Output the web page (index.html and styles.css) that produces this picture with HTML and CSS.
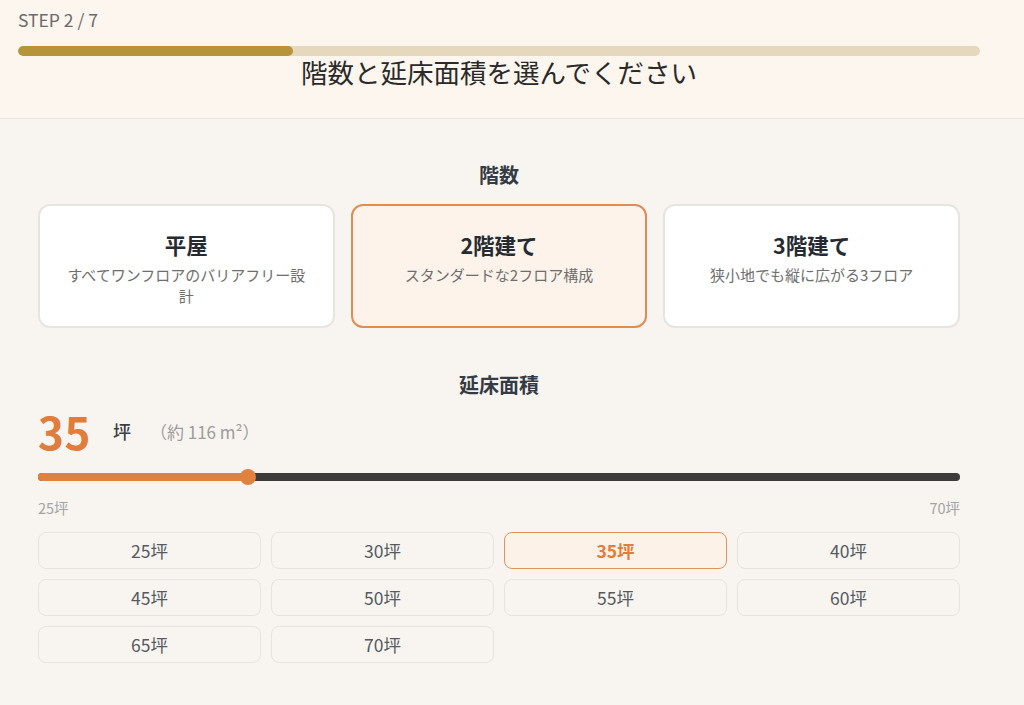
FILE: index.html
```html
<!DOCTYPE html>
<html lang="ja">
<head>
    <meta charset="UTF-8">
    <meta name="viewport" content="width=device-width, initial-scale=1.0">
    <title>STEP 2 / 7</title>
    <link rel="stylesheet" href="styles.css">
</head>
<body>
    <header class="top">
        <div class="wrap">
            <div class="step">STEP 2 / 7</div>
            <div class="progress"><div class="progress-fill" style="width: 28.57%;"></div></div>
            <h1>階数と延床面積を選んでください</h1>
        </div>
    </header>

    <main class="wrap content">
        <h2>階数</h2>
        <div class="cards">
            <div class="card">
                <div class="card-title">平屋</div>
                <div class="card-sub">すべてワンフロアのバリアフリー設計</div>
            </div>
            <div class="card selected">
                <div class="card-title">2階建て</div>
                <div class="card-sub">スタンダードな2フロア構成</div>
            </div>
            <div class="card">
                <div class="card-title">3階建て</div>
                <div class="card-sub">狭小地でも縦に広がる3フロア</div>
            </div>
        </div>

        <h2 class="area-head">延床面積</h2>
        <div class="area-value">
            <span class="num">35</span>
            <span class="unit">坪</span>
            <span class="sqm">（約 116 m²）</span>
        </div>
        <div class="slider">
            <div class="slider-fill" style="width: 22.8%;"><span class="thumb"></span></div>
        </div>
        <div class="slider-labels">
            <span>25坪</span>
            <span>70坪</span>
        </div>

        <div class="chips">
            <div class="chip">25坪</div>
            <div class="chip">30坪</div>
            <div class="chip selected">35坪</div>
            <div class="chip">40坪</div>
            <div class="chip">45坪</div>
            <div class="chip">50坪</div>
            <div class="chip">55坪</div>
            <div class="chip">60坪</div>
            <div class="chip">65坪</div>
            <div class="chip">70坪</div>
        </div>
    </main>
</body>
</html>
```

FILE: styles.css
```css
body { margin: 0; background-color: #f8f5f0; font-family: "Noto Sans CJK JP", "Noto Sans", sans-serif; color: #333; }
.wrap { width: 962px; margin-left: 18px; box-sizing: border-box; }

.top { background-color: #fdf6ee; border-bottom: 1px solid #ebe4d9; }
.top .wrap { padding: 10px 0 30px; }
.step { font-size: 17.5px; line-height: 20px; color: #6b6b6b; }
.progress { margin-top: 16px; height: 10px; border-radius: 5px; background-color: #e6d8bc; overflow: hidden; }
.progress-fill { height: 100%; background-color: #b6953a; border-radius: 5px; }
h1 { margin: 0; font-size: 26.5px; font-weight: 400; line-height: 32px; text-align: center; color: #2a2a2a; }

.content { padding: 43px 20px 40px; }
h2 { margin: 0; font-size: 20px; font-weight: 700; line-height: 26px; text-align: center; color: #343b45; }

.cards { display: grid; grid-template-columns: repeat(3, 1fr); gap: 16px; margin-top: 16px; }
.card { height: 124px; box-sizing: border-box; padding: 25px 24px 0; background: #fff; border: 2px solid #e8e5e1; border-radius: 12px; text-align: center; }
.card.selected { background: #fdf3ea; border-color: #e08c52; }
.card-title { font-size: 21.5px; font-weight: 700; line-height: 28px; color: #262a31; }
.card-sub { margin-top: 5px; font-size: 15px; line-height: 21px; color: #6e6e6e; }

.area-head { margin-top: 44px; }
.area-value { display: flex; align-items: center; margin-top: 9px; height: 48px; }
.num { font-size: 44px; font-weight: 700; color: #e07c3c; line-height: 48px; letter-spacing: 0.5px; }
.unit { margin-left: 22px; font-size: 18px; font-weight: 500; color: #3a3f47; }
.sqm { margin-left: 19px; font-size: 17px; color: #9c9c9c; }

.slider { position: relative; margin-top: 18px; height: 8px; border-radius: 4px; background-color: #3b3b3b; }
.slider-fill { position: relative; height: 100%; border-radius: 4px; background-color: #e0823f; }
.thumb { position: absolute; right: -8px; top: -4px; width: 16px; height: 16px; border-radius: 50%; background-color: #e0823f; }

.slider-labels { display: flex; justify-content: space-between; margin-top: 18px; font-size: 14.5px; line-height: 18px; color: #a3a3a3; }

.chips { display: grid; grid-template-columns: repeat(4, 1fr); gap: 10px; margin-top: 15px; }
.chip { height: 37px; box-sizing: border-box; display: flex; align-items: center; justify-content: center; border: 1px solid #e7e3dd; border-radius: 8px; background: #f8f5f0; font-size: 17.5px; color: #555a60; }
.chip.selected { border-color: #e09260; background: #fdf2e7; color: #e07c3c; font-weight: 700; }
```
